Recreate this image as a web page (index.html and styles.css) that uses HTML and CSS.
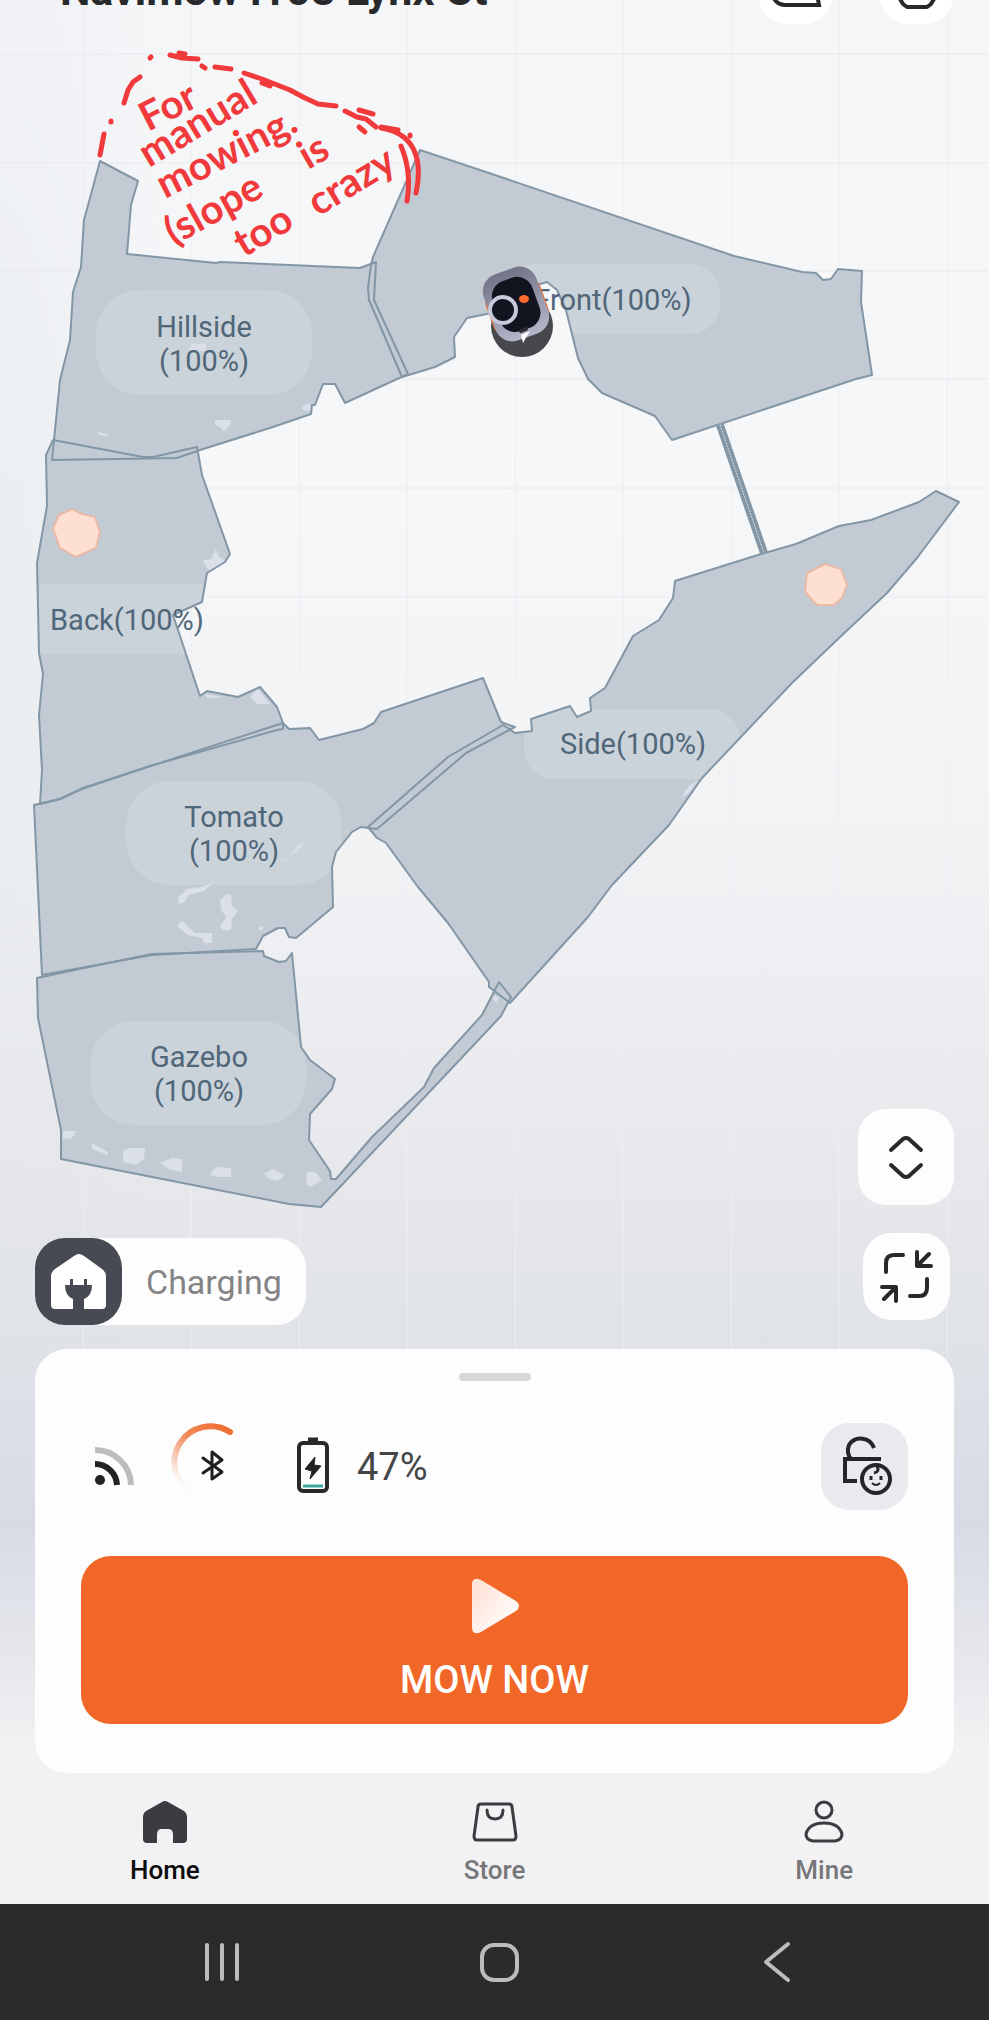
FILE: index.html
```html
<!DOCTYPE html>
<html lang="en">
	<head>
		<meta charset="UTF-8" />
		<meta name="viewport" content="width=device-width, initial-scale=1.0" />
		<title>Navimow</title>
		<link rel="stylesheet" href="styles.css">
	</head>
	<body>
		<div class="screen">
			<header class="topbar">
				<h1>Navimow i108 Lynx Ct</h1>
				<div class="topbar-actions">
					<button class="round-button" aria-label="Messages">
						<svg viewBox="0 0 75 76" fill="none" stroke="#28292b" stroke-width="4">
							<path d="M59 38V46L61 57H27C20 57 15 52 15 45V38a22 22 0 0 1 44 0z" />
						</svg>
					</button>
					<button class="round-button" aria-label="Settings">
						<svg viewBox="0 0 75 76" fill="none" stroke="#28292b" stroke-width="4" stroke-linejoin="round">
							<path d="M28 18h20l5 4 8 14v5l-9 15-4 3H28l-4-3-9-15v-5l9-14z" />
						</svg>
					</button>
				</div>
			</header>

			<main>
				<svg class="map" viewBox="0 24 989 1186" role="img" aria-label="Lawn map">
					<defs>
						<clipPath id="zones">
							<path id="hillside" d="M100 161L138 181 131 205 127 254 216 263 220 262 360 268 376 262 374 300 408 374 345 403 335 384 323 384 315 405 312 405 311 414 273 427 200 450 177 458 52 460 60 380 70 340 73 292 81 267 84 220z" />
							<path id="front" d="M420 150L489 173 734 256 802 272 816 273 823 280 831 279 838 269 862 271 861 302 872 375 856 379 672 440 655 416 602 393 588 379 578 358 566 310 557 290 547 282 537 285 510 310 487 314 467 318 454 337 455 357 435 367 402 377 369 300 368 288 371 265 373 257z" />
							<path id="back" d="M53 440L46 455 47 506 37 563 39 653 43 674 39 715 42 770 40 804 60 799 82 789 150 766 277 730 283 729 283 723 277 707 260 687 238 697 207 691 200 696 173 615 202 602 207 573 225 562 230 554 202 475 197 447 153 457 143 457z" />
							<path id="tomato" d="M34 805L60 799 83 788 283 723 289 729 310 728 319 740 363 729 374 723 381 712 483 678 501 722 515 727 466 753 377 829 368 828 361 827 352 832 336 852 332 867 333 907 296 938 289 937 285 928 278 928 263 936 256 949 152 955 42 975z" />
							<path id="side" d="M515 733L532 731 531 719 570 706 577 717 591 711 590 698 605 688 633 636 659 620 673 598 675 581 761 554 796 544 839 526 871 520 919 502 936 491 959 502 917 558 887 593 839 638 792 683 702 778 669 825 612 885 588 917 510 1003 489 987 489 982 448 923 418 887 386 843 377 838 368 827 448 757 503 725z" />
							<path id="gazebo" d="M37 978L84 968 152 954 263 951 264 956 279 962 286 961 292 953 301 1047 310 1060 335 1079 332 1089 310 1114 309 1140 330 1171 331 1179 336 1179 372 1137 424 1087 434 1068 482 1015 499 982 511 997 501 1016 321 1207 289 1204 61 1159 61 1130 38 1018z" />
						</clipPath>
						<linearGradient id="shell" x1="0" y1="0" x2="0" y2="1">
							<stop offset="0" stop-color="#747488" />
							<stop offset="1" stop-color="#b3b5c9" />
						</linearGradient>
					</defs>

					<path class="grid-rows" d="M0 54H989M0 163H989M0 271H989M0 379H989M0 488H989M0 597H989" />

					<g clip-path="url(#zones)">
						<rect class="lawn" y="24" width="989" height="1186" />
						<g class="pill">
							<rect x="96" y="290" width="216" height="105" rx="44" />
							<rect x="504" y="264" width="216" height="70" rx="30" />
							<rect x="19" y="584" width="216" height="70" rx="30" />
							<rect x="524" y="709" width="216" height="70" rx="30" />
							<rect x="126" y="781" width="216" height="104" rx="44" />
							<rect x="90" y="1021" width="216" height="104" rx="44" />
						</g>
						<!-- spots the mower has skipped -->
						<g class="patch">
							<path d="M188 350l4-6 14 0 0 7z" />
							<path d="M215 420l16 0-1 5-6 7-4-5-5-2z" />
							<path d="M97 432l12 2-2 2-7-1z" />
							<path d="M302 406l8-3 1 8-8-1z" />
							<path d="M203 560l8-1 5-10 3 8 6 4-14 12-5-6z" />
							<path d="M250 697l8-8 12 15-13 0z" />
							<path d="M204 694l20 3-16 1z" />
							<path d="M281 859l8-2 8-11 7-3-6 8-8 4-8 6z" />
							<path d="M178 897l9-8 15-2 12-5-10 9-16 4-3 7-6 2z" />
							<path d="M220 901l5-6 6-1 1 12 6 5-6 8-1 11-9 0-2-4 6-9-5-7z" />
							<path d="M178 924l5-3 5 5 6 7 18 0 0 10-8 0-2-5-14-3-10-8z" />
							<path d="M258 929l3-3 3 2-4 3z" />
							<path d="M63 1131l14 0-5 7-9 1z" />
							<path d="M92 1143l16 9 0 3-16-6z" />
							<path d="M123 1151l6-3 16 0-1 11-8 6-13-3z" />
							<path d="M160 1163l12-5 10 1 0 13-11-2z" />
							<path d="M209 1175l7-8 15 1 0 9-12 0z" />
							<path d="M264 1174l9-5 12 6-7 6-9-2z" />
							<path d="M307 1172l8 0 7 8-12 7-4-3z" />
							<path d="M681 797l8-11 9-6-10 14z" />
							<path d="M492 996l7 1-3 6z" />
						</g>
					</g>

					<g class="boundary">
						<use href="#hillside" />
						<use href="#front" />
						<use href="#back" />
						<use href="#tomato" />
						<use href="#side" />
						<use href="#gazebo" />
					</g>

					<path class="bridge" d="M720 425L764 553" />
					<path class="bridge-dots" d="M720 425L764 553" />

					<g class="no-go">
						<path d="M72 509L82 514 95 517 100 532 96 548 76 557 60 548 53 528 59 515z" />
						<path d="M825 564L841 569 847 585 842 598 834 605 817 605 805 592 807 573z" />
					</g>

					<g class="zone-name">
						<text x="204" y="337">Hillside</text>
						<text x="204" y="371">(100%)</text>
						<text x="613" y="310">Front(100%)</text>
						<text x="127" y="630">Back(100%)</text>
						<text x="633" y="754">Side(100%)</text>
						<text x="234" y="827">Tomato</text>
						<text x="234" y="861">(100%)</text>
						<text x="199" y="1067">Gazebo</text>
						<text x="199" y="1101">(100%)</text>
					</g>

					<!-- mower on its dock -->
					<circle cx="522" cy="326" r="31" fill="#47484c" />
					<g transform="rotate(-20 516 304)">
						<rect x="487" y="284" width="58" height="46" rx="12" fill="#f0703a" />
						<rect x="488" y="269" width="56" height="70" rx="18" fill="url(#shell)" />
						<rect x="495" y="278" width="42" height="53" rx="16" fill="#121420" />
					</g>
					<circle cx="503" cy="310" r="13" fill="#121420" stroke="#c8cadb" stroke-width="4" />
					<ellipse cx="524" cy="299" rx="5" ry="4" fill="#fb6a2b" />
					<path d="M521 331l5-2" stroke="#2c2d35" stroke-width="4" stroke-linecap="round" />
					<path d="M521 335l9-4-7 12z" fill="#fff" />

					<g class="note">
						<text transform="translate(148 132) rotate(-27)">For</text>
						<text transform="translate(149 168) rotate(-31)">manual</text>
						<text transform="translate(165 199) rotate(-27)">mowing.</text>
						<text transform="translate(308 170) rotate(-30)">is</text>
						<text transform="translate(174 246) rotate(-29)">(slope</text>
						<text transform="translate(244 258) rotate(-31)">too</text>
						<text transform="translate(318 217) rotate(-31)">crazy</text>
					</g>
					<g class="marker">
						<path d="M100 155L104 134M111 121v1M124 103L128 90 133 82 140 77M150 58l1-1M170 55L182 58 198 59M179 53l6 1M202 66L205 68M215 67L231 69" />
						<path d="M244 73L262 79 290 90 303 97 318 104 336 106M262 83l8 3" />
						<path d="M345 111L357 117 366 119 376 127M359 110L373 114M359 127L365 132M381 127L398 130M410 135v1" />
						<path d="M381 128C407 132 425 150 416 193M401 146Q412 172 407 201" />
					</g>
				</svg>

				<div class="map-controls">
					<div class="state-chip">
						<span class="state-icon">
							<svg viewBox="0 0 87 87" fill="#fff">
								<path d="M39 18q5-4 10 0l18 13q4 3 4 7v29q0 4-4 4H49V61q8-3 8-14h-5v-6h-3v6H38v-6h-3v6h-5q0 11 8 14v10H20q-4 0-4-4V38q0-4 4-7z" />
							</svg>
						</span>
						<span class="state-text">Charging</span>
					</div>
					<div class="map-tools">
						<button class="tool tool-large" aria-label="Switch map">
							<svg viewBox="0 0 96 96">
								<path d="M33 41L45 30q3-2 6 0l12 11M33 56l12 11q3 2 6 0l12-11" />
							</svg>
						</button>
						<button class="tool" aria-label="Fit map">
							<svg viewBox="0 0 87 87">
								<path d="M23 39V30q0-8 8-8h9M64 46v9q0 8-8 8h-9" />
								<path d="M54 19v14h14M55 32L66 21M19 54h14v14M32 55L21 66" />
							</svg>
						</button>
					</div>
				</div>

				<section class="card">
					<div class="handle"></div>
					<div class="status">
						<svg class="icon-signal" viewBox="0 0 39 39" fill="none">
							<circle cx="5" cy="33" r="5" fill="#222" />
							<path d="M0 17A22 22 0 0 1 22 38" stroke="#222" stroke-width="6" />
							<path d="M0 3A36 36 0 0 1 36 38" stroke="#bdbdbf" stroke-width="6" />
						</svg>
						<svg class="icon-bluetooth" viewBox="0 0 87 87" fill="none">
							<defs>
								<linearGradient id="spin" x1="1" y1="0" x2="0.3" y2="1">
									<stop offset="0" stop-color="#ee6a2c" />
									<stop offset="0.45" stop-color="#f0895a" />
									<stop offset="1" stop-color="#f0895a" stop-opacity="0" />
								</linearGradient>
							</defs>
							<path d="M58 9A36 36 0 1 0 19 70" stroke="url(#spin)" stroke-width="6" stroke-linecap="round" />
							<path d="M31 35L50 49 40 56V29l10 8-19 13" stroke="#1e1e1e" stroke-width="3" stroke-linecap="round" stroke-linejoin="round" />
						</svg>
						<svg class="icon-battery" viewBox="0 0 32 60" fill="none">
							<rect x="2" y="6" width="28" height="48" rx="4" stroke="#28292b" stroke-width="4" />
							<path d="M11 3h10" stroke="#28292b" stroke-width="5" />
							<path d="M18 20L8 32l7 2-2 8 11-13-7-1z" fill="#222" stroke="#222" stroke-width="1" />
							<path d="M6 49h20" stroke="#38ab9d" stroke-width="3" />
						</svg>
						<span class="percent">47%</span>
						<button class="lock" aria-label="Child lock">
							<svg viewBox="0 0 87 87" fill="none" stroke="#23252b" stroke-width="4">
								<path d="M30 36Q25 30 28 22A14 14 0 0 1 53 25M60 36H24V58H36" />
								<circle cx="55" cy="56" r="14" />
								<path d="M56 43q3 6-3 7" stroke-width="3" />
								<path d="M51 60q4 4 8 0" stroke-width="2" />
								<path d="M50 53v4M60 53v4" stroke-width="3" />
							</svg>
						</button>
					</div>
					<button class="mow">
						<svg viewBox="0 0 50 56">
							<defs>
								<linearGradient id="play" x1="0" y1="0.3" x2="0.7" y2="1">
									<stop offset="0" stop-color="#ffe3d7" />
									<stop offset="1" stop-color="#fff" />
								</linearGradient>
							</defs>
							<path d="M2 7Q2-2 11 2L46 23q6 5 0 10L11 54Q2 58 2 49z" fill="url(#play)" />
						</svg>
						<span>MOW NOW</span>
					</button>
				</section>
			</main>

			<nav class="tabs">
				<a class="tab active" href="#home">
					<svg viewBox="0 0 46 46" fill="#3b3c3f">
						<path d="M20 3q3-2 6 0l16 9q3 2 3 5v23q0 4-4 4H31V36q0-6-4-6h-8q-4 0-4 6v8H5q-4 0-4-4V17q0-3 3-5z" />
					</svg>
					<span>Home</span>
				</a>
				<a class="tab" href="#store">
					<svg viewBox="0 0 46 46" fill="none" stroke="#3b3c3f" stroke-width="3" stroke-linejoin="round" stroke-linecap="round">
						<path d="M9 5h28q3 0 3 3l4 29q0 4-3 4H5q-3 0-3-4L6 8q0-3 3-3z" />
						<path d="M15 11q0 9 8 9t8-9" />
					</svg>
					<span>Store</span>
				</a>
				<a class="tab" href="#mine">
					<svg viewBox="0 0 46 46" fill="none" stroke="#3b3c3f" stroke-width="3">
						<circle cx="23" cy="11" r="8" />
						<path d="M12 42Q5 41 5 35 8 24 23 24t18 11q0 6-7 7z" />
					</svg>
					<span>Mine</span>
				</a>
			</nav>
		</div>

		<footer class="system-bar">
			<button class="system-button" aria-label="Recents">
				<svg viewBox="0 0 42 42"><path d="M6 4v34M21 4v34M36 4v34" /></svg>
			</button>
			<button class="system-button" aria-label="Home screen">
				<svg viewBox="0 0 42 42"><rect x="3" y="4" width="35" height="35" rx="12" /></svg>
			</button>
			<button class="system-button" aria-label="Back">
				<svg viewBox="0 0 42 42"><path d="M32 3L10 21 32 39" /></svg>
			</button>
		</footer>
	</body>
</html>
```
FILE: styles.css
```css
:root {
	--ink: #28292b;
	--orange: #f16728;
	--dark-bar: #2a2b2d;
	--edge: 35px;
}
* {
	box-sizing: border-box;
}
body {
	margin: 0;
	font-family: Roboto, 'Liberation Sans', sans-serif;
	background-color: var(--dark-bar);
	color: var(--ink);
	overflow-x: hidden;
}
button {
	border: none;
	padding: 0;
	font-family: inherit;
	cursor: pointer;
}
svg {
	display: block;
}
.screen {
	overflow: hidden;
	background-image:
		radial-gradient(20% 50% at 0 30%, rgba(220, 224, 230, 0.4), transparent),
		repeating-linear-gradient(to right, transparent 0 82px, rgba(236, 238, 241, 0.5) 82px 84px, transparent 84px 108px),
		linear-gradient(to bottom, #f5f6f8 0%, #f5f7f9 25%, #f1f3f5 43%, #e8e9ec 60%, #dfe2e7 71%, #d8dbe5 80%, #e8e9ed 88%, #f2f2f4 92%, #f2f2f4 100%);
	background-size: 100% 100%, 100% 72%, 100% 100%;
	background-repeat: no-repeat;
}

/* header is scrolled partly out of view */
.topbar {
	display: flex;
	justify-content: space-between;
	align-items: center;
	margin-top: -52px;
	padding: 0 var(--edge) 0 60px;
}
h1 {
	margin: 0;
	padding-top: 8px;
	font-size: 43px;
	line-height: 48px;
	font-weight: 700;
}
.topbar-actions {
	display: flex;
	gap: 46px;
}
.round-button {
	width: 75px;
	height: 76px;
	border-radius: 30px;
	background-color: #fff;
}

.map {
	width: 100%;
}
.grid-rows {
	stroke: #e9ebee;
	stroke-width: 2;
	opacity: 0.5;
}
.lawn {
	fill: #c2cad4;
}
.pill {
	fill: #cad2da;
}
.patch {
	fill: #dadfe9;
}
.boundary {
	fill: none;
	stroke: #8396a6;
	stroke-width: 2;
	stroke-linejoin: round;
}
.bridge {
	stroke: #8396a6;
	stroke-width: 8;
}
.bridge-dots {
	stroke: #d5dfe6;
	stroke-width: 1;
	stroke-dasharray: 2 1;
}
.no-go {
	fill: #fee0d3;
	stroke: #ebb9a5;
	stroke-width: 2;
}
.zone-name {
	font-size: 29px;
	fill: #506679;
	text-anchor: middle;
}
.note {
	font-family: Lato, sans-serif;
	font-size: 40px;
	font-weight: 700;
	fill: #f13a3b;
}
.marker {
	fill: none;
	stroke: #f13a3b;
	stroke-width: 5;
	stroke-linecap: round;
	stroke-linejoin: round;
}

/* controls lie over the bottom of the map */
.map-controls {
	position: relative;
	display: flex;
	justify-content: space-between;
	align-items: flex-end;
	margin-top: -101px;
	padding: 0 var(--edge);
}
.state-chip {
	display: flex;
	align-items: center;
	gap: 24px;
	padding-right: 24px;
	border-radius: 30px;
	background-color: #fdfdfe;
}
.state-icon {
	width: 87px;
	height: 87px;
	border-radius: 30px;
	background-color: #484a53;
}
.state-text {
	font-size: 34px;
	line-height: 44px;
	color: #848486;
}
.map-tools {
	display: flex;
	flex-direction: column;
	align-items: center;
	gap: 28px;
	padding-bottom: 5px;
}
.tool {
	width: 87px;
	height: 87px;
	border-radius: 28px;
	background-color: #fdfdfe;
}
.tool-large {
	width: 96px;
	height: 96px;
}
.tool svg {
	fill: none;
	stroke: var(--ink);
	stroke-width: 4;
	stroke-linecap: round;
	stroke-linejoin: round;
}

.card {
	margin: 24px var(--edge) 0;
	padding: 24px 46px 49px;
	border-radius: 32px;
	background-color: #fdfdfd;
}
.handle {
	width: 72px;
	height: 8px;
	margin: 0 auto 42px;
	border-radius: 4px;
	background-color: #d8d8d9;
}
.status {
	display: flex;
	align-items: center;
	gap: 38px;
	margin-bottom: 46px;
	padding-left: 14px;
}
.icon-signal {
	width: 39px;
}
.icon-bluetooth {
	width: 87px;
	overflow: visible;
}
.icon-battery {
	width: 32px;
}
.percent {
	margin-left: -10px;
	font-size: 38px;
	line-height: 44px;
	color: #454547;
}
.lock {
	width: 87px;
	height: 87px;
	margin-left: auto;
	border-radius: 28px;
	background-color: #e9eaee;
}
.mow {
	display: flex;
	flex-direction: column;
	justify-content: center;
	align-items: center;
	gap: 24px;
	width: 100%;
	height: 168px;
	border-radius: 30px;
	background-color: var(--orange);
	color: #fff;
	font-size: 38px;
	line-height: 44px;
	font-weight: 500;
}
.mow svg {
	width: 50px;
	height: 56px;
}

.tabs {
	display: flex;
}
.tab {
	flex: 1;
	display: flex;
	flex-direction: column;
	align-items: center;
	gap: 10px;
	padding: 26px 0 19px;
	font-size: 26px;
	line-height: 30px;
	font-weight: 500;
	color: #777779;
	text-decoration: none;
}
.tab.active {
	color: #0c0c0d;
}
.tab svg {
	width: 46px;
	height: 46px;
}

.system-bar {
	display: flex;
	padding: 0 73px 0 83px;
	background-color: var(--dark-bar);
}
.system-button {
	flex: 1;
	display: flex;
	justify-content: center;
	align-items: center;
	height: 116px;
	background: none;
}
.system-button svg {
	width: 42px;
	fill: none;
	stroke: #bbbcbe;
	stroke-width: 4;
	stroke-linecap: round;
	stroke-linejoin: round;
}
```
